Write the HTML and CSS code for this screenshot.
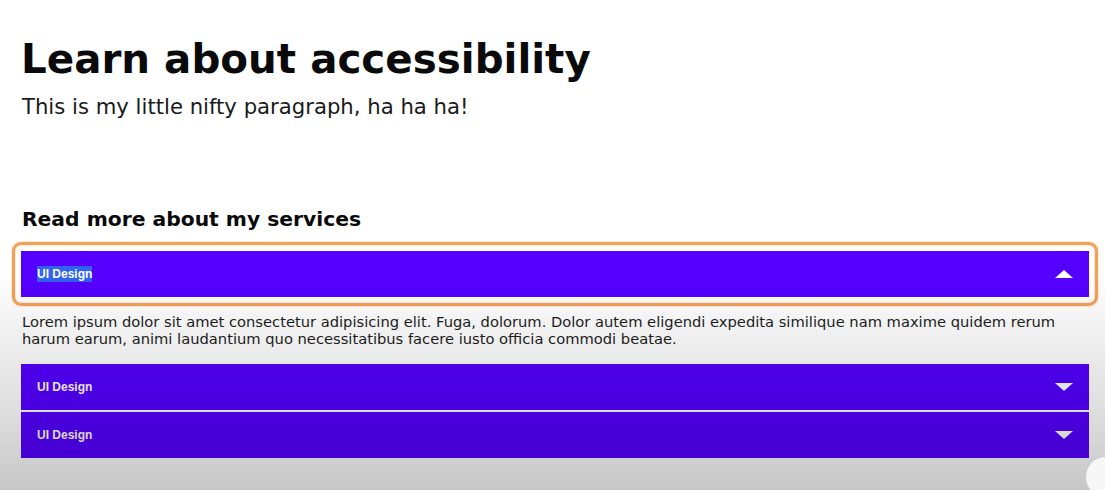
FILE: index.html
```html
<!DOCTYPE html>
<html lang="en">
<head>
<meta charset="utf-8">
<title>Learn about accessibility</title>
<link rel="stylesheet" href="styles.css">
</head>
<body>
<main class="page">
  <h1 class="title">Learn about accessibility</h1>
  <p class="intro">This is my little nifty paragraph, ha ha ha!</p>

  <section class="services">
    <h2 class="services-title">Read more about my services</h2>
    <div class="accordion">
      <div class="item">
        <button class="header focused" type="button">
          <span class="label"><span class="sel">UI Design</span></span>
          <svg class="arrow" width="18" height="8" viewBox="0 0 18 8"><polygon points="9,0 18,8 0,8" fill="#fff"/></svg>
        </button>
        <p class="panel">Lorem ipsum dolor sit amet consectetur adipisicing elit. Fuga, dolorum. Dolor autem eligendi expedita similique nam maxime quidem rerum harum earum, animi laudantium quo necessitatibus facere iusto officia commodi beatae.</p>
      </div>
      <div class="item">
        <button class="header" type="button">
          <span class="label">UI Design</span>
          <svg class="arrow" width="18" height="8" viewBox="0 0 18 8"><polygon points="0,0 18,0 9,8" fill="#fff"/></svg>
        </button>
      </div>
      <div class="item">
        <button class="header" type="button">
          <span class="label">UI Design</span>
          <svg class="arrow" width="18" height="8" viewBox="0 0 18 8"><polygon points="0,0 18,0 9,8" fill="#fff"/></svg>
        </button>
      </div>
    </div>
  </section>
</main>
<div class="shade"></div>
<div class="dot"></div>
</body>
</html>
```
FILE: styles.css
```css
* { box-sizing: border-box; }
html, body { height: 100%; }
body {
  margin: 0;
  background: #fff;
  font-family: "DejaVu Sans", "Open Sans", sans-serif;
  color: #111;
  overflow: hidden;
}
.page {
  padding: 35px 16px 0 21px;
}
.title {
  margin: 0;
  font-size: 40.4px;
  line-height: 48px;
  font-weight: 700;
  color: #0a0a0a;
}
.intro {
  margin: 10px 0 0 1px;
  font-size: 21.2px;
  line-height: 28px;
  font-weight: 400;
  color: #1a1a1a;
}
.services { margin-top: 84px; }
.services-title {
  margin: 0 0 0 1px;
  font-size: 20.3px;
  line-height: 28px;
  font-weight: 700;
  color: #0a0a0a;
}
.accordion {
  margin-top: 18px;
  display: flex;
  flex-direction: column;
  gap: 2px;
}
.header {
  position: relative;
  display: flex;
  align-items: center;
  justify-content: space-between;
  width: 100%;
  height: 46px;
  padding: 0 16px;
  border: 0;
  background: #5500ff;
  color: #fff;
  font-family: "Liberation Sans", Arial, sans-serif;
  font-weight: 700;
  font-size: 12px;
  cursor: pointer;
}
.focused::after {
  content: "";
  position: absolute;
  inset: -9px;
  border: 3px solid #f3a157;
  border-radius: 9px;
  box-shadow: 0 0 2px rgba(243,150,70,0.7), inset 0 0 2px rgba(243,150,70,0.6);
  pointer-events: none;
}
.sel {
  background: #2f63f0;
  color: #fff;
  padding: 1px 0;
}
.arrow { display: block; }
.panel {
  margin: 16px 0 15px 1px;
  font-size: 14.7px;
  line-height: 17px;
  color: #1e1e1e;
}
.shade {
  position: fixed;
  inset: 0;
  pointer-events: none;
  background: linear-gradient(to bottom, rgba(0,0,0,0) 0%, rgba(0,0,0,0) 56%, rgba(0,0,0,0.05) 66%, rgba(0,0,0,0.13) 84%, rgba(0,0,0,0.22) 100%);
}
.dot {
  position: fixed;
  left: 1086px;
  top: 457px;
  width: 40px;
  height: 40px;
  border-radius: 50%;
  background: #f7f7f7;
}
```
